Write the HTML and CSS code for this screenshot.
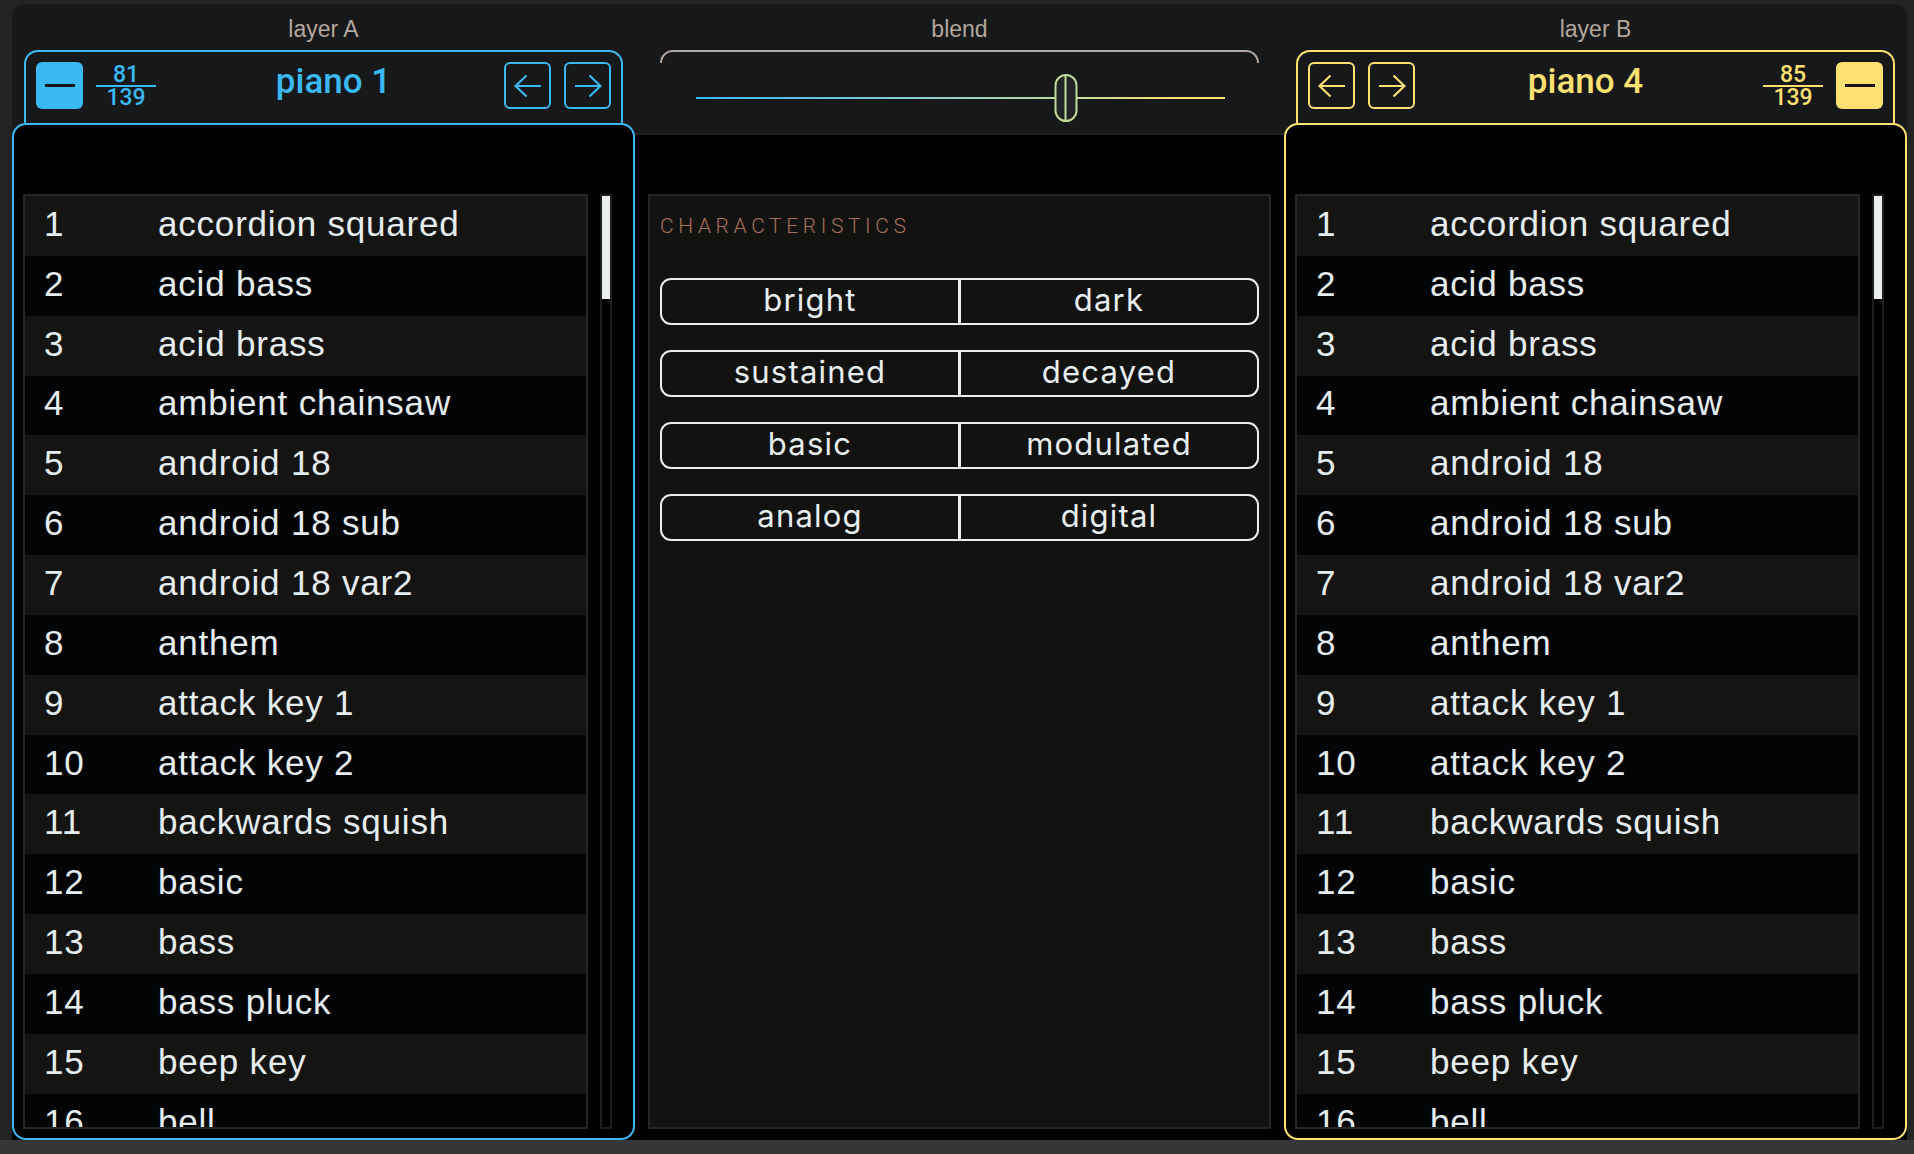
FILE: index.html
```html
<!DOCTYPE html>
<html>
<head>
<meta charset="utf-8">
<link rel="stylesheet" href="styles.css">
</head>
<body>
<div class="app">
  <section class="col layer-a">
    <div class="label">layer A</div>
    <div class="head">
      <div class="minus"><i></i></div>
      <div class="frac"><span>81</span><b></b><span>139</span></div>
      <div class="title">piano 1</div>
      <div class="arrows">
        <div class="abtn"><svg width="28" height="24" viewBox="0 0 28 24"><path d="M1.5 12H27M12.5 1.5L1.5 12l11 10.5"/></svg></div>
        <div class="abtn"><svg width="28" height="24" viewBox="0 0 28 24"><path d="M26.5 12H1M15.5 1.5L26.5 12l-11 10.5"/></svg></div>
      </div>
    </div>
    <div class="panel">
      <div class="list">
        <div class="row"><span class="num">1</span><span>accordion squared</span></div>
        <div class="row"><span class="num">2</span><span>acid bass</span></div>
        <div class="row"><span class="num">3</span><span>acid brass</span></div>
        <div class="row"><span class="num">4</span><span>ambient chainsaw</span></div>
        <div class="row"><span class="num">5</span><span>android 18</span></div>
        <div class="row"><span class="num">6</span><span>android 18 sub</span></div>
        <div class="row"><span class="num">7</span><span>android 18 var2</span></div>
        <div class="row"><span class="num">8</span><span>anthem</span></div>
        <div class="row"><span class="num">9</span><span>attack key 1</span></div>
        <div class="row"><span class="num">10</span><span>attack key 2</span></div>
        <div class="row"><span class="num">11</span><span>backwards squish</span></div>
        <div class="row"><span class="num">12</span><span>basic</span></div>
        <div class="row"><span class="num">13</span><span>bass</span></div>
        <div class="row"><span class="num">14</span><span>bass pluck</span></div>
        <div class="row"><span class="num">15</span><span>beep key</span></div>
        <div class="row"><span class="num">16</span><span>bell</span></div>
      </div>
      <div class="track"><div class="thumb"></div></div>
    </div>
  </section>

  <section class="col blend">
    <div class="label">blend</div>
    <div class="cap"></div>
    <div class="slider">
      <div class="line"></div>
      <div class="knob"></div>
    </div>
    <div class="chars">
      <div class="chars-title">CHARACTERISTICS</div>
      <div class="toggles">
        <div class="toggle"><span>bright</span><span>dark</span></div>
        <div class="toggle"><span>sustained</span><span>decayed</span></div>
        <div class="toggle"><span>basic</span><span>modulated</span></div>
        <div class="toggle"><span>analog</span><span>digital</span></div>
      </div>
    </div>
  </section>

  <section class="col layer-b">
    <div class="label">layer B</div>
    <div class="head">
      <div class="arrows">
        <div class="abtn"><svg width="28" height="24" viewBox="0 0 28 24"><path d="M1.5 12H27M12.5 1.5L1.5 12l11 10.5"/></svg></div>
        <div class="abtn"><svg width="28" height="24" viewBox="0 0 28 24"><path d="M26.5 12H1M15.5 1.5L26.5 12l-11 10.5"/></svg></div>
      </div>
      <div class="title">piano 4</div>
      <div class="frac"><span>85</span><b></b><span>139</span></div>
      <div class="minus"><i></i></div>
    </div>
    <div class="panel">
      <div class="list">
        <div class="row"><span class="num">1</span><span>accordion squared</span></div>
        <div class="row"><span class="num">2</span><span>acid bass</span></div>
        <div class="row"><span class="num">3</span><span>acid brass</span></div>
        <div class="row"><span class="num">4</span><span>ambient chainsaw</span></div>
        <div class="row"><span class="num">5</span><span>android 18</span></div>
        <div class="row"><span class="num">6</span><span>android 18 sub</span></div>
        <div class="row"><span class="num">7</span><span>android 18 var2</span></div>
        <div class="row"><span class="num">8</span><span>anthem</span></div>
        <div class="row"><span class="num">9</span><span>attack key 1</span></div>
        <div class="row"><span class="num">10</span><span>attack key 2</span></div>
        <div class="row"><span class="num">11</span><span>backwards squish</span></div>
        <div class="row"><span class="num">12</span><span>basic</span></div>
        <div class="row"><span class="num">13</span><span>bass</span></div>
        <div class="row"><span class="num">14</span><span>bass pluck</span></div>
        <div class="row"><span class="num">15</span><span>beep key</span></div>
        <div class="row"><span class="num">16</span><span>bell</span></div>
      </div>
      <div class="track"><div class="thumb"></div></div>
    </div>
  </section>
</div>
</body>
</html>
```

FILE: styles.css
```css
html, body {
  margin: 0;
  padding: 0;
}
body {
  width: 1914px;
  height: 1154px;
  overflow: hidden;
  background: linear-gradient(#232323 0 1140px, #363636 1140px);
  font-family: "Liberation Sans", Arial, sans-serif;
}
.app {
  margin: 4px 0 0 12px;
  width: 1895px;
  height: 1136px;
  display: grid;
  grid-template-columns: 623px 623px 623px;
  column-gap: 13px;
  background: linear-gradient(#17181a 0 129px, #212223 129px 131px, #000 131px);
  border-radius: 12px 12px 0 0;
}
.col {
  display: flex;
  flex-direction: column;
  min-height: 0;
}
.layer-a { --c: #3ab8f2; }
.layer-b { --c: #fde070; }

.label {
  height: 46px;
  box-sizing: border-box;
  padding-top: 5px;
  line-height: 40px;
  text-align: center;
  font-size: 23px;
  color: #b3a79d;
}

/* header */
.head {
  height: 73px;
  box-sizing: border-box;
  margin: 0 12px;
  border: 2px solid var(--c);
  border-bottom: 0;
  border-radius: 14px 14px 0 0;
  padding: 10px 10px 0;
  display: flex;
  align-items: flex-start;
}
.minus {
  width: 47px;
  height: 47px;
  border-radius: 6px;
  background: var(--c);
  display: flex;
  align-items: center;
  justify-content: center;
  flex: none;
}
.minus i {
  display: block;
  width: 30px;
  height: 3px;
  background: #141414;
}
.frac {
  width: 60px;
  height: 47px;
  margin: 0 13px;
  display: flex;
  flex-direction: column;
  align-items: center;
  justify-content: center;
  font-family: Roboto, sans-serif;
  font-weight: 500;
  font-size: 23px;
  color: var(--c);
  flex: none;
}
.frac span {
  display: block;
  height: 21px;
  line-height: 21px;
}
.frac b {
  display: block;
  width: 60px;
  height: 2px;
  background: var(--c);
}
.title {
  flex: 1;
  text-align: center;
  height: 47px;
  line-height: 40px;
  padding-right: 6px;
  font-family: Roboto, sans-serif;
  font-weight: 500;
  font-size: 35px;
  color: var(--c);
}
.layer-b .title {
  padding-right: 0;
  padding-left: 6px;
}
.arrows {
  display: flex;
  gap: 13px;
  flex: none;
}
.abtn {
  width: 47px;
  height: 47px;
  box-sizing: border-box;
  border: 2px solid var(--c);
  border-radius: 6px;
  display: flex;
  align-items: center;
  justify-content: center;
}
.abtn svg path {
  fill: none;
  stroke: var(--c);
  stroke-width: 2.2;
}

/* list panel */
.panel {
  flex: 1;
  min-height: 0;
  border: 2px solid var(--c);
  border-radius: 14px;
  background: #000;
  display: flex;
  padding: 69px 21px 9px 9px;
  gap: 12px;
}
.list {
  flex: 1;
  border: 2px solid #262624;
  overflow: hidden;
}
.row {
  height: 59.85px;
  box-sizing: border-box;
  padding-bottom: 4px;
  display: flex;
  align-items: center;
  font-size: 35px;
  letter-spacing: 0.8px;
  color: #e6edf0;
  white-space: nowrap;
}
.row:nth-child(odd) { background: #141412; }
.row:nth-child(even) { background: #030405; }
.num {
  width: 133px;
  padding-left: 19px;
  box-sizing: border-box;
  flex: none;
}
.track {
  width: 12px;
  box-sizing: border-box;
  border: 2px solid #1e1e1d;
  background: #000;
  flex: none;
}
.thumb {
  width: 8px;
  height: 103px;
  background: #e8eef0;
}

/* blend */
.cap {
  margin: 0 12px;
  height: 13px;
  box-sizing: border-box;
  border: 2px solid #b3a69c;
  border-bottom: 0;
  border-radius: 14px 14px 0 0;
}
.slider {
  position: relative;
  height: 48px;
  margin: 11px 46px 0 47.5px;
}
.line {
  margin-top: 23px;
  height: 2px;
  background: linear-gradient(90deg, #3ab8f2 0%, #86cbd2 40%, #b6d9a4 66%, #cfdd97 76%, #fde070 90%);
}
.knob {
  position: absolute;
  top: 0;
  left: 69.9%;
  transform: translateX(-50%);
  width: 23px;
  height: 48px;
  box-sizing: border-box;
  border: 2px solid #bfdb9c;
  border-radius: 12px;
  background: #232425;
}
.knob::after {
  content: "";
  position: absolute;
  left: 8.5px;
  top: 0;
  width: 2px;
  height: 100%;
  background: #bfdb9c;
}
.chars {
  flex: 1;
  min-height: 0;
  margin: 72px 0 11px;
  border: 2px solid #252523;
  background: #121210;
  padding: 0 10px;
}
.chars-title {
  margin-top: 18px;
  line-height: 24px;
  font-family: Roboto, sans-serif;
  font-weight: 300;
  font-size: 21px;
  letter-spacing: 4.6px;
  color: #a8705a;
}
.toggles {
  margin-top: 40px;
  display: flex;
  flex-direction: column;
  gap: 25px;
}
.toggle {
  height: 47px;
  box-sizing: border-box;
  border: 2px solid #e8eef0;
  border-radius: 11px;
  display: flex;
}
.toggle span {
  flex: 1;
  text-align: center;
  line-height: 40px;
  font-family: Inter, Roboto, sans-serif;
  font-size: 31px;
  letter-spacing: 1.2px;
  color: #e8eef0;
}
.toggle span:first-child {
  border-right: 3px solid #e8eef0;
}
```
